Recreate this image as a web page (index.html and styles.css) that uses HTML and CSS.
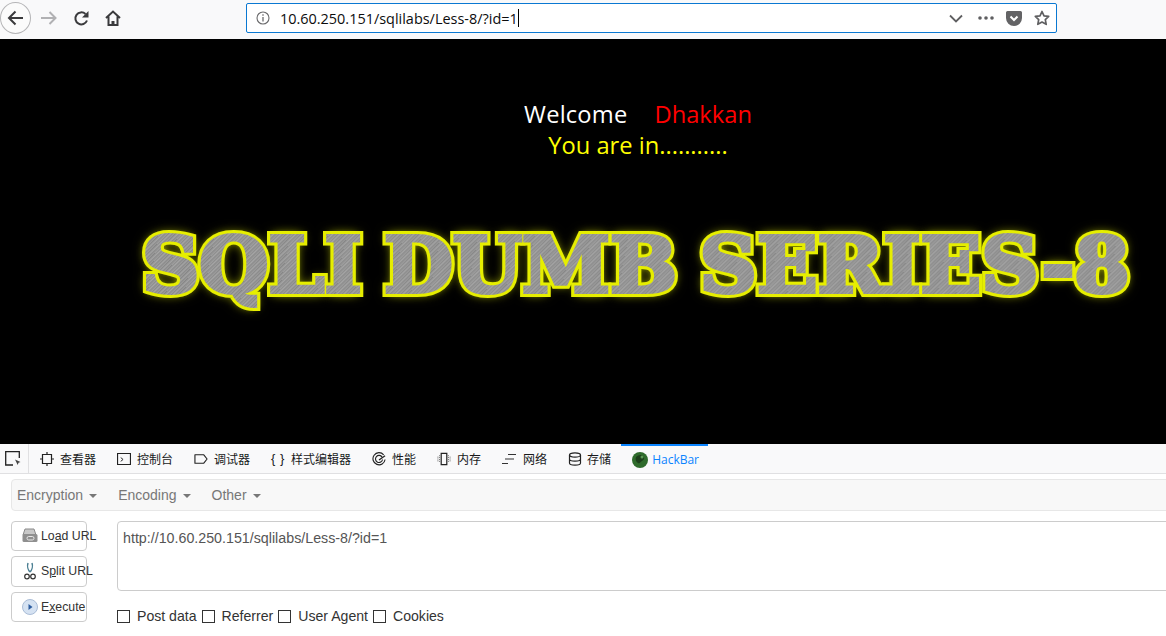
FILE: index.html
```html
<!DOCTYPE html>
<html lang="zh-CN">
<head>
    <meta charset="UTF-8" />
    <title>Less-8</title>
    <link rel="stylesheet" href="styles.css">
</head>
<body>
    <!-- browser toolbar -->
    <div class="toolbar">
        <div class="nav-buttons">
            <span class="back-btn">
                <svg width="20" height="20" viewBox="0 0 20 20"><path d="M17 10H3.500M9.500 3.500L3 10l6.500 6.500" fill="none" stroke="#3a3a3c" stroke-width="2"/></svg>
            </span>
            <svg class="forward" width="18" height="18" viewBox="0 0 18 18"><path d="M1 9h14M9.500 3l6 6-6 6" fill="none" stroke="#b1b1b3" stroke-width="2"/></svg>
            <svg class="reload" width="17" height="17" viewBox="0 0 17 17"><path d="M14 10.500A6 6 0 1 1 12.500 4" fill="none" stroke="#3a3a3c" stroke-width="2"/><path d="M15.500 1v6.500H9z" fill="#3a3a3c"/></svg>
            <svg class="home" width="16" height="16" viewBox="0 0 16 16"><path d="M1 8l7-6.500L15 8M3.500 6.500V15h9V6.500" fill="none" stroke="#3a3a3c" stroke-width="2"/><path d="M6.500 15v-4h3v4" fill="#3a3a3c"/></svg>
        </div>
        <div class="url-bar">
            <svg class="info-icon" width="14" height="14" viewBox="0 0 14 14"><circle cx="7" cy="7" r="6" fill="none" stroke="#6a6a6c" stroke-width="1.100"/><path d="M7 6v4.500M7 3.300v1.400" stroke="#6a6a6c" stroke-width="1.300"/></svg>
            <span class="url-text">10.60.250.151/sqlilabs/Less-8/?id=1</span><span class="caret"></span>
            <div class="url-actions">
                <svg width="14" height="9" viewBox="0 0 14 9"><path d="M1 1.500l6 6 6-6" fill="none" stroke="#5f5f61" stroke-width="1.800"/></svg>
                <svg class="dots" width="16" height="4" viewBox="0 0 16 4"><circle cx="2" cy="2" r="1.800" fill="#5f5f61"/><circle cx="8" cy="2" r="1.800" fill="#5f5f61"/><circle cx="14" cy="2" r="1.800" fill="#5f5f61"/></svg>
                <svg class="pocket" width="16" height="15" viewBox="0 0 16 15"><path d="M1.500 0h13A1.500 1.500 0 0 1 16 1.500V7A8 8 0 0 1 0 7V1.500A1.500 1.500 0 0 1 1.500 0z" fill="#636365"/><path d="M4.500 5.500L8 9l3.500-3.500" fill="none" stroke="#fff" stroke-width="2"/></svg>
                <svg class="star" width="16" height="16" viewBox="0 0 16 16"><path d="M8 1.500l2 4.300 4.700.6-3.400 3.200.9 4.700L8 12l-4.200 2.300.9-4.700L1.300 6.400 6 5.800z" fill="none" stroke="#5f5f61" stroke-width="1.700" stroke-linejoin="round"/></svg>
            </div>
        </div>
    </div>

    <!-- the page itself -->
    <div class="page">
        <div class="message">
            <div><span class="welcome">Welcome</span><span class="name">Dhakkan</span></div>
            <div class="you-are-in">You are in...........</div>
        </div>
        <div class="series-wrap">
            <div class="series-title" data-title="SQLI DUMB SERIES-8">SQLI DUMB SERIES-8</div>
        </div>
    </div>

    <!-- devtools -->
    <div class="devtools">
        <div class="tabs">
            <span class="picker">
                <svg width="17" height="15" viewBox="0 0 17 15"><path d="M8 14H.7V.7h13.600V7" fill="none" stroke="#222" stroke-width="1.300"/><path d="M10 8.500l5.500 2.500-2 .8-.8 2.200z" fill="#444"/></svg>
            </span>
            <span class="tab">
                <svg viewBox="0 0 14 14"><path d="M2.500 2.500h9v9h-9zM7 0v2.500M7 11.500V14M0 7h2.500M11.500 7H14" fill="none" stroke="#222" stroke-width="1.200"/></svg>
                查看器
            </span>
            <span class="tab">
                <svg viewBox="0 0 15 15"><path d="M.6 1.600h13.800v11.800H.6z" fill="none" stroke="#222" stroke-width="1.200"/><path d="M4 6l2.500 2L4 10" fill="none" stroke="#222"/></svg>
                控制台
            </span>
            <span class="tab">
                <svg viewBox="0 0 15 15"><path d="M1 3h9.500l3.500 4.500L10.500 12H1z" fill="none" stroke="#222" stroke-width="1.200" stroke-linejoin="round"/></svg>
                调试器
            </span>
            <span class="tab">
                <span class="braces">{ }</span>
                样式编辑器
            </span>
            <span class="tab">
                <svg viewBox="0 0 15 15"><path d="M12.500 3A6.500 6.500 0 1 0 14 8" fill="none" stroke="#222" stroke-width="1.200"/><path d="M10.800 5.500A3.800 3.800 0 1 0 11.300 8" fill="none" stroke="#222" stroke-width="1.200"/><path d="M7.500 8.500L14 4" stroke="#222" stroke-width="1.400"/></svg>
                性能
            </span>
            <span class="tab">
                <svg viewBox="0 0 15 14"><path d="M4.500 1h6v12h-6z" fill="none" stroke="#222" stroke-width="1.300"/><path d="M2.800 3v8M1 4.500v5M12.200 3v8M14 4.500v5" stroke="#555" stroke-dasharray="1 1"/></svg>
                内存
            </span>
            <span class="tab tab-network">
                <svg viewBox="0 0 14 14"><path d="M6 2.500h8M3 7h9M0 11.500h6" stroke="#333" stroke-width="1.100"/></svg>
                网络
            </span>
            <span class="tab tab-storage">
                <svg viewBox="0 0 13 14"><ellipse cx="6.500" cy="3" rx="5.500" ry="2.200" fill="none" stroke="#222" stroke-width="1.200"/><path d="M1 3v8c0 1.200 2.500 2.200 5.500 2.200S12 12.200 12 11V3M1 7c0 1.200 2.500 2.200 5.500 2.200S12 8.200 12 7" fill="none" stroke="#222" stroke-width="1.200"/></svg>
                存储
            </span>
            <span class="tab tab-active">
                <svg viewBox="0 0 16 16"><circle cx="8" cy="8" r="8" fill="#2f6b2c"/><path d="M4 5c2-2 5-3 7-1s1 4-1 5-2 3-4 2-3-4-2-6z" fill="#1d3f1b"/><circle cx="10" cy="5" r="1.500" fill="#5c9a55"/></svg>
                HackBar
            </span>
        </div>

        <div class="hackbar">
            <div class="menu-bar">
                <span class="menu-item">Encryption</span>
                <span class="menu-item">Encoding</span>
                <span class="menu-item">Other</span>
            </div>
            <div class="hackbar-body">
                <div class="actions">
                    <div class="action-btn">
                        <svg width="16" height="15" viewBox="0 0 16 15"><path d="M3 1h9l2 6H1z" fill="#c9c9c9" stroke="#8a8a8a"/><rect x="0.500" y="6" width="15" height="8" rx="1.500" fill="#8f8f8f"/><rect x="5" y="8.500" width="7" height="3.500" rx="1.700" fill="none" stroke="#e8e8e8"/></svg>
                        <span>Lo<u>a</u>d URL</span>
                    </div>
                    <div class="action-btn action-split">
                        <svg width="16" height="18" viewBox="0 0 16 18"><path d="M6 1c-1 3 0 7 2 9M10 1c1 3 0 7-2 9" fill="none" stroke="#4b7f93" stroke-width="1.500"/><circle cx="5" cy="14.500" r="2.300" fill="none" stroke="#333" stroke-width="1.200"/><circle cx="11" cy="14.500" r="2.300" fill="none" stroke="#333" stroke-width="1.200"/></svg>
                        <span>S<u>p</u>lit URL</span>
                    </div>
                    <div class="action-btn">
                        <svg width="16" height="16" viewBox="0 0 16 16"><circle cx="8" cy="8" r="7.500" fill="#d5e2f2" stroke="#a9bcd6"/><path d="M6.500 5l4 3-4 3z" fill="#2d5da0"/></svg>
                        <span>E<u>x</u>ecute</span>
                    </div>
                </div>
                <div class="input-side">
                    <div class="url-input">http://10.60.250.151/sqlilabs/Less-8/?id=1</div>
                    <div class="options">
                        <label class="option"><span class="check"></span>Post data</label>
                        <label class="option"><span class="check"></span>Referrer</label>
                        <label class="option"><span class="check"></span>User Agent</label>
                        <label class="option"><span class="check"></span>Cookies</label>
                    </div>
                </div>
            </div>
        </div>
    </div>
</body>
</html>
```

FILE: styles.css
```css
* {
    box-sizing: border-box;
}

html, body {
    margin: 0;
    padding: 0;
    height: 636px;
    overflow: hidden;
}

body {
    display: flex;
    flex-direction: column;
    font-family: "Liberation Sans", Arial, sans-serif;
    background-color: #fff;
}

/* toolbar */
.toolbar {
    display: flex;
    height: 39px;
    padding: 3px 0 0 0;
    align-items: flex-start;
    background-color: #f9f9fa;
    flex-shrink: 0;
}

.nav-buttons {
    display: flex;
    align-items: center;
    width: 246px;
    height: 30px;
}

.back-btn {
    display: flex;
    align-items: center;
    justify-content: center;
    width: 31px;
    height: 32px;
    border: 1px solid #b5b5b7;
    border-radius: 50%;
    background-color: #fbfbfb;
}

.forward {
    margin-left: 9px;
}

.reload {
    margin-left: 15px;
}

.home {
    margin-left: 15px;
}

.url-bar {
    display: flex;
    align-items: center;
    width: 811px;
    height: 30px;
    padding: 0 6px 0 9px;
    background-color: #fff;
    border: 1px solid #0a78d2;
    border-radius: 2px;
}

.info-icon {
    margin-right: 10px;
}

.url-text {
    font-family: "Open Sans", sans-serif;
    font-size: 14.45px;
    color: #0c0c0d;
}

.caret {
    width: 1px;
    height: 18px;
    background-color: #000;
}

.url-actions {
    display: flex;
    align-items: center;
    margin-left: auto;
}

.dots {
    margin-left: 15px;
}

.pocket {
    margin-left: 12px;
}

.star {
    margin-left: 12px;
}

/* page */
.page {
    height: 405px;
    flex-shrink: 0;
    background-color: #000;
    overflow: hidden;
    border-top: 1px solid #000;
}

.message {
    padding: 59px 0 0 110px;
    text-align: center;
    font-family: "Open Sans", sans-serif;
    font-size: 23.7px;
    line-height: 31px;
}

.welcome {
    color: #fff;
    margin-right: 27px;
    letter-spacing: 0.2px;
}

.name {
    color: #f00;
}

.you-are-in {
    color: #ff0;
}

.series-wrap {
    margin-top: 62px;
    padding-left: 142px;
}

/* the banner was an image on the original page, here it stays text */
.series-title {
    position: relative;
    display: inline-block;
    white-space: nowrap;
    font-family: "DejaVu Serif", serif;
    font-weight: 700;
    font-size: 76px;
    line-height: 86px;
    word-spacing: -5px;
    transform-origin: left center;
    transform: scaleX(1.045);
    color: #e6ee00;
    -webkit-text-stroke: 10px #e6ee00;
    text-shadow: 0 0 3px #f0f800, 0 0 6px #e0e800, 0 0 10px #c0c800, 0 0 14px #808800;
}

.series-title::after {
    content: attr(data-title);
    position: absolute;
    left: 0;
    top: 0;
    -webkit-text-stroke: 4px transparent;
    text-shadow: none;
    color: transparent;
    background-image: repeating-linear-gradient(135deg, #858585 0, #a6a6a6 2px, #8c8c8c 3px, #9e9e9e 5px);
    -webkit-background-clip: text;
    background-clip: text;
}

/* devtools */
.devtools {
    flex: 1;
    display: flex;
    flex-direction: column;
    min-height: 0;
}

.tabs {
    display: flex;
    align-items: center;
    height: 30px;
    flex-shrink: 0;
    background-color: #f9f9fa;
    border-bottom: 1px solid #e0e0e2;
    font-family: "Noto Sans CJK SC", sans-serif;
    font-size: 12px;
    color: #18191a;
}

.picker {
    display: flex;
    align-items: center;
    width: 29px;
    height: 100%;
    padding-left: 5px;
    margin-right: 11px;
    border-right: 1px solid #e0e0e2;
}

.tab {
    display: flex;
    align-items: center;
    gap: 6px;
    height: 100%;
    padding-right: 21px;
}

.tab svg {
    width: 14px;
    height: 14px;
    flex-shrink: 0;
}

.braces {
    width: 14px;
    font-family: "Liberation Sans", sans-serif;
    font-size: 13px;
    letter-spacing: 0.5px;
    white-space: nowrap;
}

.tab-network {
    gap: 7px;
}

.tab-storage {
    gap: 5px;
}

.tab-active {
    padding: 0 9px 0 11px;
    margin-left: -11px;
    color: #0a84ff;
    font-family: "Open Sans", sans-serif;
    border-top: 2px solid #0a84ff;
}

.tab-active svg {
    width: 16px;
    height: 16px;
    margin-right: -2px;
}

/* hackbar */
.hackbar {
    flex: 1;
    padding: 5px 0 0 11px;
    overflow: hidden;
}

.menu-bar {
    display: flex;
    align-items: center;
    gap: 21px;
    height: 32px;
    padding-left: 5px;
    margin-right: -10px;
    background-color: #f8f8f8;
    border: 1px solid #e7e7e7;
    border-radius: 4px;
    font-size: 14px;
    color: #777;
}

.menu-item::after {
    content: "";
    display: inline-block;
    margin-left: 6px;
    vertical-align: middle;
    border-top: 4px solid #777;
    border-left: 4px solid transparent;
    border-right: 4px solid transparent;
}

.hackbar-body {
    display: flex;
    margin-top: 10px;
}

.actions {
    display: flex;
    flex-direction: column;
    gap: 5px;
    width: 76px;
    margin-right: 30px;
    flex-shrink: 0;
}

.action-btn {
    display: flex;
    align-items: center;
    height: 30px;
    padding: 0 0 1px 10px;
    gap: 3px;
    border: 1px solid #ccc;
    border-radius: 4px;
    background-color: #fff;
    font-size: 12.3px;
    color: #333;
    white-space: nowrap;
}

.action-split {
    height: 31px;
}

.action-btn svg {
    flex-shrink: 0;
}

.input-side {
    flex: 1;
    min-width: 0;
}

.url-input {
    height: 70px;
    margin-right: -20px;
    padding: 8px 5px;
    background-color: #fff;
    border: 1px solid #ccc;
    border-radius: 4px;
    font-size: 14.25px;
    color: #555;
}

.options {
    display: flex;
    margin-top: 17px;
    gap: 5px;
    font-size: 14.1px;
    color: #333;
}

.option {
    display: flex;
    align-items: center;
}

.check {
    width: 13px;
    height: 13px;
    margin-right: 7px;
    border: 1px solid #333;
    background-color: #fff;
}
```
